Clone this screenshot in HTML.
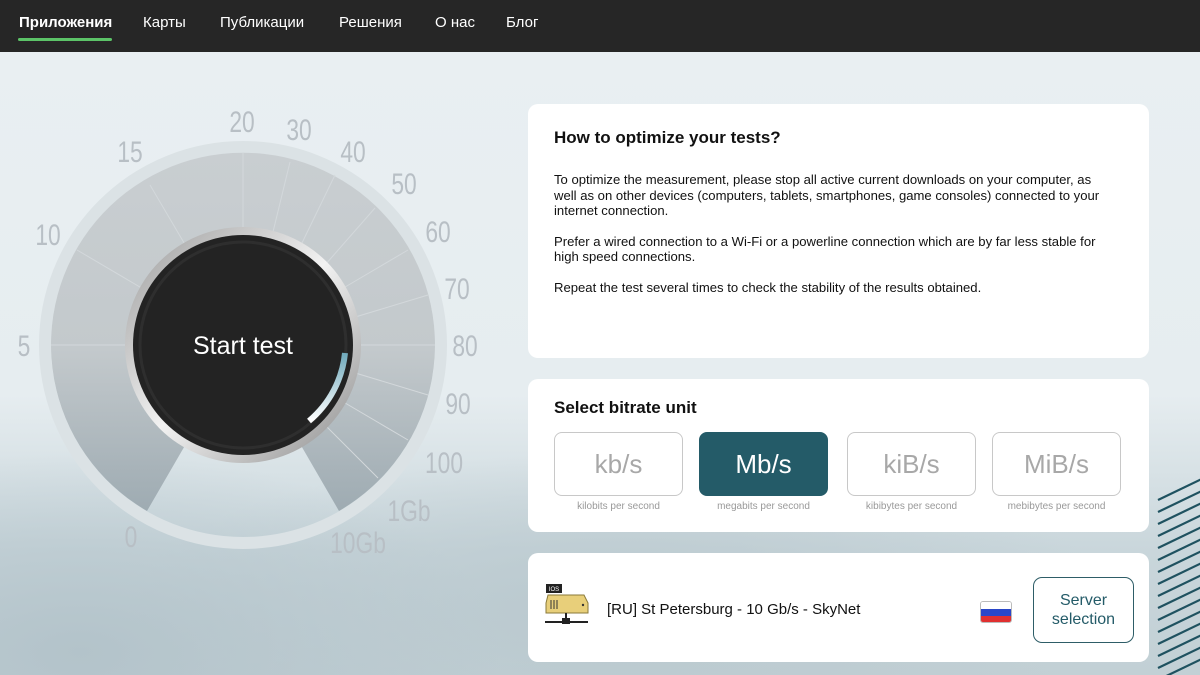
<!DOCTYPE html>
<html><head><meta charset="utf-8"><style>
*{margin:0;padding:0;box-sizing:border-box}
body{width:1200px;height:675px;overflow:hidden;position:relative;font-family:"Liberation Sans",sans-serif;background:#e8eef1}
.bg{position:absolute;left:0;top:52px;width:1200px;height:623px;
background:radial-gradient(ellipse 420px 200px at 80px 600px,#b3c3ca 0%,rgba(179,195,202,0) 100%),
radial-gradient(ellipse 500px 160px at 620px 560px,#b9c8ce 0%,rgba(185,200,206,0) 100%),
linear-gradient(180deg,#e9eff2 0%,#e6edf0 55%,#c9d6db 80%,#c2d0d5 100%)}
.nav{position:absolute;left:0;top:0;width:1200px;height:52px;background:#262626}
.nav a{position:absolute;top:14px;color:#fff;font-size:15px;text-decoration:none}
.nav .act{font-weight:bold}
.nav .ul{position:absolute;left:18px;top:38px;width:94px;height:3px;background:#5cc468;border-radius:2px}
.card{position:absolute;left:528px;width:621px;background:#fff;border-radius:10px}
h2{font-size:17px;font-weight:bold;color:#111}
.p{font-size:13.1px;color:#111;line-height:15.5px;max-width:555px}
.unit{position:absolute;top:53px;width:129px;height:64px;border:1px solid #c8c8c8;border-radius:8px;color:#a8a8a8;font-size:26px;text-align:center;line-height:62px}
.unit.sel{background:#245b68;border-color:#245b68;color:#fff}
.cap{position:absolute;top:122px;width:129px;text-align:center;font-size:10px;color:#999}
.btn{position:absolute;left:505px;top:24px;width:101px;height:66px;border:1px solid #2e5d67;border-radius:9px;color:#245b68;font-size:16px;text-align:center;line-height:19px;padding-top:13px}
</style></head><body>
<div class="bg"></div>
<svg style="position:absolute;left:1150px;top:470px" width="50" height="205">
<g stroke="#1f5260" stroke-width="2.2">
<line x1="8" y1="30" x2="60" y2="5"/><line x1="8" y1="42" x2="60" y2="17"/><line x1="8" y1="54" x2="60" y2="29"/><line x1="8" y1="66" x2="60" y2="41"/><line x1="8" y1="78" x2="60" y2="53"/><line x1="8" y1="90" x2="60" y2="65"/><line x1="8" y1="102" x2="60" y2="77"/><line x1="8" y1="114" x2="60" y2="89"/><line x1="8" y1="126" x2="60" y2="101"/><line x1="8" y1="138" x2="60" y2="113"/><line x1="8" y1="150" x2="60" y2="125"/><line x1="8" y1="162" x2="60" y2="137"/><line x1="8" y1="174" x2="60" y2="149"/><line x1="8" y1="186" x2="60" y2="161"/><line x1="8" y1="198" x2="60" y2="173"/><line x1="8" y1="210" x2="60" y2="185"/>
</g></svg>
<svg style="position:absolute;left:0;top:0" width="520" height="675">
<defs>
<linearGradient id="g" x1="0" y1="0" x2="0" y2="1"><stop offset="0" stop-color="#c9ced1"/><stop offset="0.55" stop-color="#c3c9cc"/><stop offset="1" stop-color="#9eabb2"/></linearGradient>
<linearGradient id="s" x1="0" y1="0" x2="1" y2="1"><stop offset="0" stop-color="#9a9a9a"/><stop offset="0.5" stop-color="#f2f2f2"/><stop offset="1" stop-color="#8a8a8a"/></linearGradient>
<linearGradient id="b" x1="0" y1="0" x2="0" y2="1"><stop offset="0" stop-color="#6fa9bb"/><stop offset="1" stop-color="#ffffff"/></linearGradient>
</defs>
<circle cx="243" cy="345" r="198" fill="none" stroke="#dbe2e5" stroke-width="12"/>
<path d="M147,511 A192,192 0 1 1 339,511 L299.5,442.9 A113,113 0 1 0 186.5,442.9 Z" fill="url(#g)"/>
<g stroke="#d3d8db" stroke-width="1">
<line x1="243" y1="153" x2="243" y2="232"/><line x1="51" y1="345" x2="130" y2="345"/><line x1="435" y1="345" x2="356" y2="345"/>
<line x1="150" y1="185" x2="190" y2="253"/><line x1="77" y1="250" x2="145" y2="290"/><line x1="290" y1="162" x2="272" y2="236"/><line x1="335" y1="175" x2="300" y2="247"/><line x1="375" y1="208" x2="325" y2="265"/><line x1="408" y1="250" x2="340" y2="290"/><line x1="428" y1="295" x2="352" y2="318"/><line x1="428" y1="395" x2="352" y2="372"/><line x1="408" y1="440" x2="340" y2="400"/><line x1="378" y1="478" x2="325" y2="425"/>
</g>
<circle cx="243" cy="345" r="118" fill="url(#s)"/>
<circle cx="243" cy="345" r="110" fill="#232323"/>
<circle cx="243" cy="345" r="103" fill="none" stroke="#2e2e2e" stroke-width="3"/>
<path d="M345,353 A102,102 0 0 1 309,421" fill="none" stroke="url(#b)" stroke-width="6"/>
<text x="243" y="354" text-anchor="middle" fill="#fff" font-size="25" font-family="Liberation Sans">Start test</text>
<g fill="#b8bfc5" font-size="30" font-family="Liberation Sans" text-anchor="middle">
<text transform="translate(242,132) scale(0.76,1)">20</text><text transform="translate(299,140) scale(0.76,1)">30</text><text transform="translate(130,162) scale(0.76,1)">15</text><text transform="translate(353,162) scale(0.76,1)">40</text><text transform="translate(404,194) scale(0.76,1)">50</text><text transform="translate(48,245) scale(0.76,1)">10</text><text transform="translate(438,242) scale(0.76,1)">60</text><text transform="translate(457,299) scale(0.76,1)">70</text><text transform="translate(24,356) scale(0.76,1)">5</text><text transform="translate(465,356) scale(0.76,1)">80</text><text transform="translate(458,414) scale(0.76,1)">90</text><text transform="translate(444,473) scale(0.76,1)">100</text><text transform="translate(409,521) scale(0.76,1)">1Gb</text><text transform="translate(131,547) scale(0.76,1)">0</text><text transform="translate(358,553) scale(0.76,1)">10Gb</text>
</g>
</svg>
<div class="nav">
<a class="act" style="left:19px">Приложения</a><a style="left:143px">Карты</a><a style="left:220px">Публикации</a><a style="left:339px">Решения</a><a style="left:435px">О нас</a><a style="left:506px">Блог</a>
<div class="ul"></div>
</div>
<div class="card" style="top:104px;height:254px;padding:24px 26px">
<h2>How to optimize your tests?</h2>
<p class="p" style="margin-top:24px">To optimize the measurement, please stop all active current downloads on your computer, as well as on other devices (computers, tablets, smartphones, game consoles) connected to your internet connection.</p>
<p class="p" style="margin-top:15px">Prefer a wired connection to a Wi-Fi or a powerline connection which are by far less stable for high speed connections.</p>
<p class="p" style="margin-top:15px">Repeat the test several times to check the stability of the results obtained.</p>
</div>
<div class="card" style="top:379px;height:153px">
<h2 style="position:absolute;left:26px;top:19px">Select bitrate unit</h2>
<div class="unit" style="left:26px">kb/s</div><div class="unit sel" style="left:171px">Mb/s</div><div class="unit" style="left:319px">kiB/s</div><div class="unit" style="left:464px">MiB/s</div>
<div class="cap" style="left:26px">kilobits per second</div><div class="cap" style="left:171px">megabits per second</div><div class="cap" style="left:319px">kibibytes per second</div><div class="cap" style="left:464px">mebibytes per second</div>
</div>
<div class="card" style="top:553px;height:109px">
<svg style="position:absolute;left:16px;top:30px" width="46" height="42">
<rect x="2" y="1" width="16" height="9" fill="#222"/><text x="10" y="8" font-size="6" fill="#fff" text-anchor="middle" font-family="Liberation Sans">IOS</text>
<path d="M4,12 L40,12 L44,20 L44,30 L2,30 L2,20 Z" fill="#e8cf7a" stroke="#8a7a3a" stroke-width="1"/>
<line x1="7" y1="17" x2="7" y2="26" stroke="#333" stroke-width="1"/><line x1="10" y1="17" x2="10" y2="26" stroke="#333"/><line x1="13" y1="17" x2="13" y2="26" stroke="#333"/>
<circle cx="39" cy="22" r="1.2" fill="#333"/>
<line x1="22" y1="30" x2="22" y2="38" stroke="#222" stroke-width="2"/><line x1="1" y1="39" x2="44" y2="39" stroke="#222" stroke-width="2"/><rect x="18" y="35" width="8" height="6" fill="#222"/>
</svg>
<div style="position:absolute;left:79px;top:48px;font-size:15px;color:#111">[RU] St Petersburg - 10 Gb/s - SkyNet</div>
<div style="position:absolute;left:452px;top:48px;width:32px;height:22px;border:1px solid #bbb;border-radius:3px;overflow:hidden">
<div style="height:7px;background:#fff"></div><div style="height:7px;background:#2a47c8"></div><div style="height:7px;background:#e03030"></div></div>
<div class="btn">Server<br>selection</div>
</div>
</body></html>
